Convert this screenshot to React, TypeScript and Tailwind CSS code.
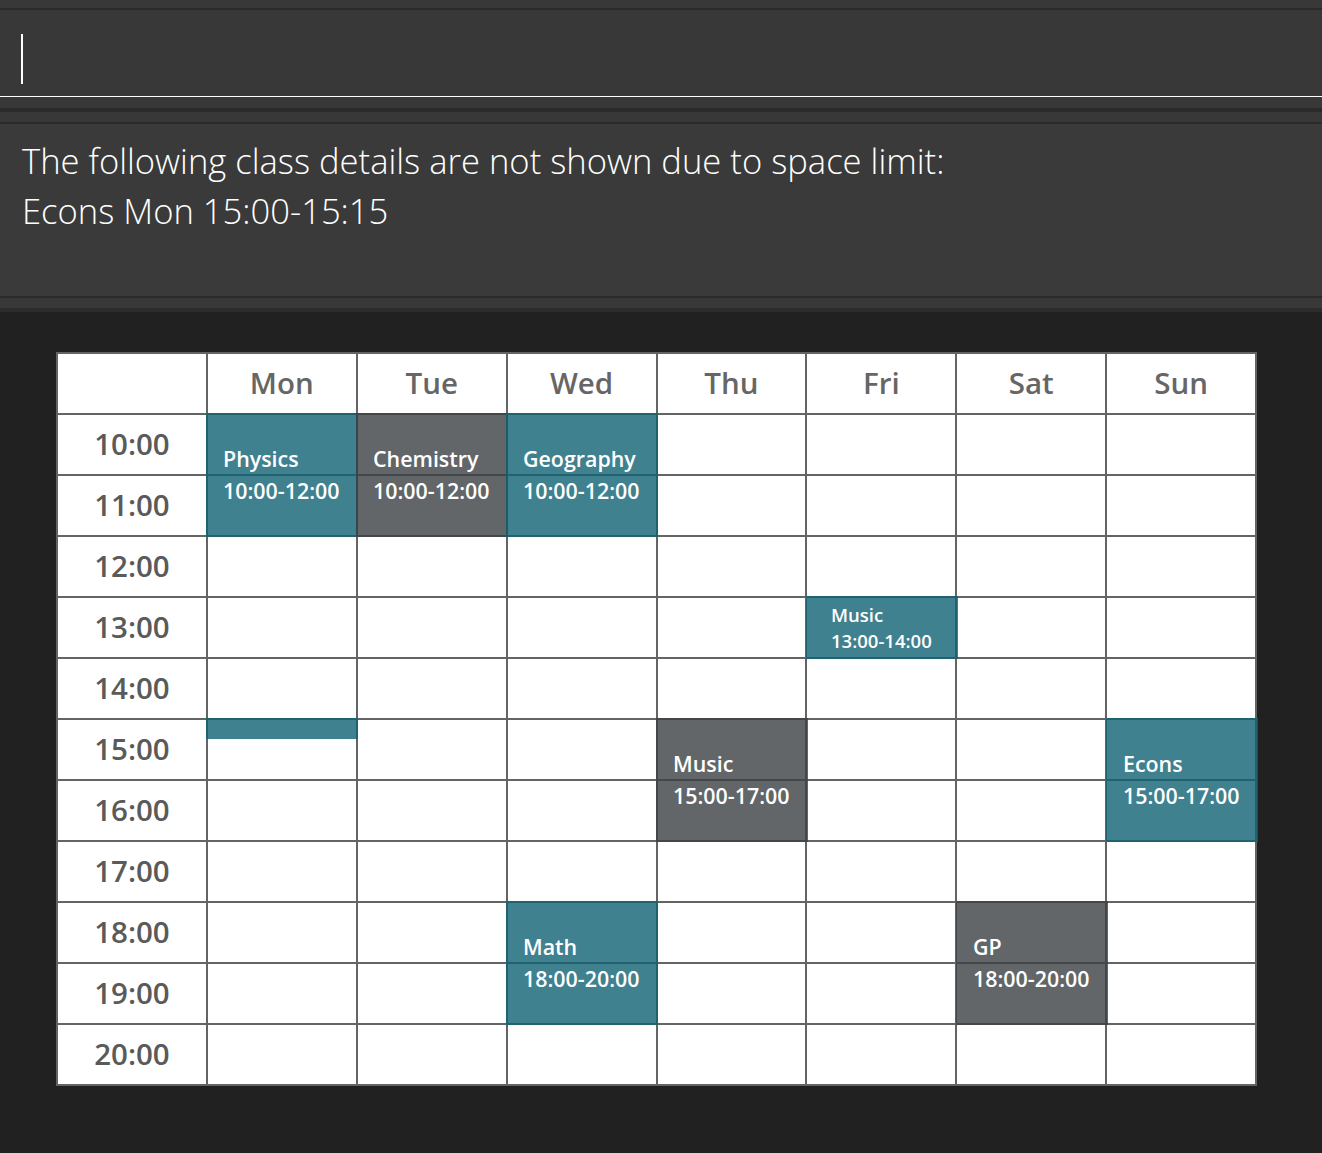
import React from "react";

const days = ["Mon", "Tue", "Wed", "Thu", "Fri", "Sat", "Sun"];
const times = ["10:00", "11:00", "12:00", "13:00", "14:00", "15:00", "16:00", "17:00", "18:00", "19:00", "20:00"];

type Block = { col: number; row: number; rows: number; name?: string; time?: string; grey?: boolean; height?: number };

const blocks: Block[] = [
  { col: 1, row: 1, rows: 2, name: "Physics", time: "10:00-12:00" },
  { col: 2, row: 1, rows: 2, name: "Chemistry", time: "10:00-12:00", grey: true },
  { col: 3, row: 1, rows: 2, name: "Geography", time: "10:00-12:00" },
  { col: 5, row: 4, rows: 1, name: "Music", time: "13:00-14:00" },
  { col: 1, row: 6, rows: 1, height: 21 },
  { col: 4, row: 6, rows: 2, name: "Music", time: "15:00-17:00", grey: true },
  { col: 7, row: 6, rows: 2, name: "Econs", time: "15:00-17:00" },
  { col: 3, row: 9, rows: 2, name: "Math", time: "18:00-20:00" },
  { col: 6, row: 9, rows: 2, name: "GP", time: "18:00-20:00", grey: true },
];

export default function App() {
  const font = { fontFamily: '"Open Sans", "Noto Sans", sans-serif' };
  return (
    <div className="w-full min-h-[1153px] bg-[#212121]" style={font}>
      <div className="h-[8px] bg-[#383838]" />
      <div className="h-[2px] bg-[#2a2a2a]" />
      <div className="h-[86px] bg-[#383838] pt-[24px] pl-[21px]">
        <div className="w-[2px] h-[50px] bg-white" />
      </div>
      <div className="h-[1px] bg-white" />
      <div className="h-[11px] bg-[#383838]" />
      <div className="h-[4px] bg-[#2a2a2a]" />
      <div className="h-[10px] bg-[#383838]" />
      <div className="h-[2px] bg-[#2a2a2a]" />
      <div className="h-[172px] bg-[#3a3a3a] pt-[12px] pl-[22px] text-white font-light text-[34.6px] leading-[50px]">
        <div>The following class details are not shown due to space limit:</div>
        <div>Econs Mon 15:00-15:15</div>
      </div>
      <div className="h-[2px] bg-[#2a2a2a]" />
      <div className="h-[10px] bg-[#383838]" />
      <div className="h-[4px] bg-[#2c2c2c]" />
      <div className="pt-[40px] pl-[56px] pb-[60px]">
        <div className="relative w-[1201px] grid grid-cols-8 gap-[2px] p-[2px] bg-[#646464]">
          <div className="h-[59px] bg-white" />
          {days.map((d) => (
            <div key={d} className="h-[59px] bg-white flex items-center justify-center text-[29.5px] font-semibold text-[#666666]">
              {d}
            </div>
          ))}
          {times.map((t) => (
            <React.Fragment key={t}>
              <div className="h-[59px] bg-white flex items-center justify-center text-[29.5px] font-semibold text-[#5a5a5a]">
                {t}
              </div>
              {days.map((d) => (
                <div key={d} className="h-[59px] bg-white" />
              ))}
            </React.Fragment>
          ))}
          {blocks.map((b, i) => {
            const big = b.rows > 1;
            return (
              <div
                key={i}
                className={
                  "absolute flex flex-col justify-center text-white font-semibold " +
                  (b.grey ? "bg-[rgba(59,64,68,0.8)] " : "bg-[rgba(16,98,116,0.8)] ") +
                  (big ? "pl-[17px] text-[21.4px] leading-[32px]" : "pl-[25px] text-[18.5px] leading-[26px]")
                }
                style={{
                  left: b.col * 150,
                  top: b.row * 61,
                  width: 152,
                  height: b.height ?? b.rows * 61 + 2,
                }}
              >
                {b.name && <div>{b.name}</div>}
                {b.time && <div>{b.time}</div>}
              </div>
            );
          })}
        </div>
      </div>
    </div>
  );
}
